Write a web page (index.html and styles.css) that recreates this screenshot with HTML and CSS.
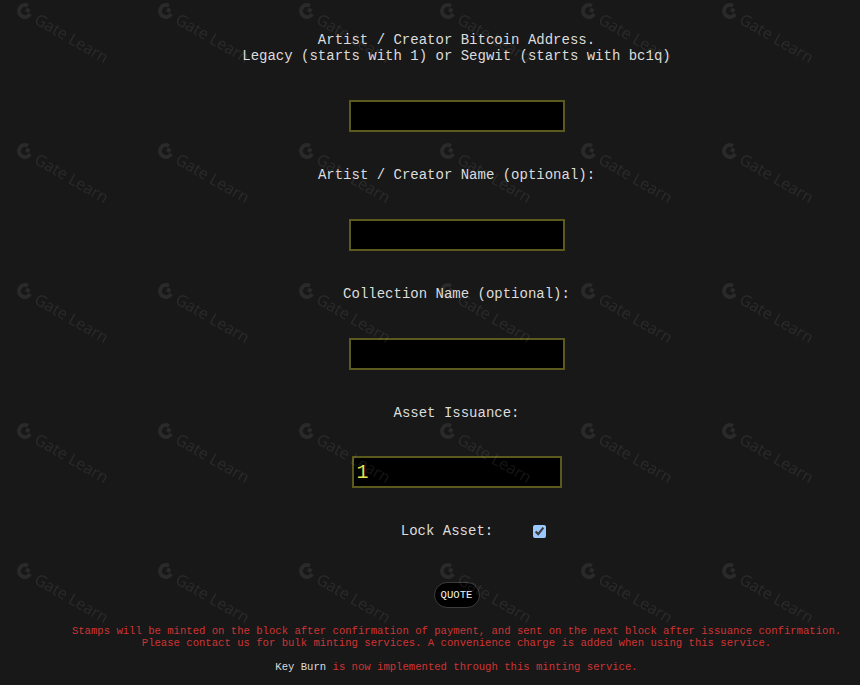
FILE: index.html
```html
<!DOCTYPE html>
<html lang="en">
<head>
<meta charset="utf-8">
<title>Stamp Minting</title>
<link rel="stylesheet" href="styles.css">
</head>
<body>
<main class="mint-form">
  <label class="label" for="addr">Artist / Creator Bitcoin Address.<br>Legacy (starts with 1) or Segwit (starts with bc1q)</label>
  <input class="field" id="addr" type="text">

  <label class="label" for="artist">Artist / Creator Name (optional):</label>
  <input class="field" id="artist" type="text">

  <label class="label" for="collection">Collection Name (optional):</label>
  <input class="field" id="collection" type="text">

  <label class="label" for="qty">Asset Issuance:</label>
  <input class="field field-qty" id="qty" type="text" value="1">

  <div class="lock-row">
    <label class="label" for="lock">Lock Asset:</label>
    <input class="check" id="lock" type="checkbox" checked>
  </div>

  <button class="quote-btn" type="button">QUOTE</button>

  <p class="notes">Stamps will be minted on the block after confirmation of payment, and sent on the next block after issuance confirmation.<br>Please contact us for bulk minting services. A convenience charge is added when using this service.</p>
  <p class="notes notes-key"><span class="hl">Key Burn</span> is now implemented through this minting service.</p>
</main>

<div class="watermarks" aria-hidden="true">
  <div class="mark"><svg viewBox="0 0 16 16"><path d="M8 0A8 8 0 1 0 16 8H12A4 4 0 1 1 8 4Z"/><rect x="8" y="4" width="4" height="4"/></svg><span>Gate Learn</span></div>
  <div class="mark"><svg viewBox="0 0 16 16"><path d="M8 0A8 8 0 1 0 16 8H12A4 4 0 1 1 8 4Z"/><rect x="8" y="4" width="4" height="4"/></svg><span>Gate Learn</span></div>
  <div class="mark"><svg viewBox="0 0 16 16"><path d="M8 0A8 8 0 1 0 16 8H12A4 4 0 1 1 8 4Z"/><rect x="8" y="4" width="4" height="4"/></svg><span>Gate Learn</span></div>
  <div class="mark"><svg viewBox="0 0 16 16"><path d="M8 0A8 8 0 1 0 16 8H12A4 4 0 1 1 8 4Z"/><rect x="8" y="4" width="4" height="4"/></svg><span>Gate Learn</span></div>
  <div class="mark"><svg viewBox="0 0 16 16"><path d="M8 0A8 8 0 1 0 16 8H12A4 4 0 1 1 8 4Z"/><rect x="8" y="4" width="4" height="4"/></svg><span>Gate Learn</span></div>
  <div class="mark"><svg viewBox="0 0 16 16"><path d="M8 0A8 8 0 1 0 16 8H12A4 4 0 1 1 8 4Z"/><rect x="8" y="4" width="4" height="4"/></svg><span>Gate Learn</span></div>

  <div class="mark"><svg viewBox="0 0 16 16"><path d="M8 0A8 8 0 1 0 16 8H12A4 4 0 1 1 8 4Z"/><rect x="8" y="4" width="4" height="4"/></svg><span>Gate Learn</span></div>
  <div class="mark"><svg viewBox="0 0 16 16"><path d="M8 0A8 8 0 1 0 16 8H12A4 4 0 1 1 8 4Z"/><rect x="8" y="4" width="4" height="4"/></svg><span>Gate Learn</span></div>
  <div class="mark"><svg viewBox="0 0 16 16"><path d="M8 0A8 8 0 1 0 16 8H12A4 4 0 1 1 8 4Z"/><rect x="8" y="4" width="4" height="4"/></svg><span>Gate Learn</span></div>
  <div class="mark"><svg viewBox="0 0 16 16"><path d="M8 0A8 8 0 1 0 16 8H12A4 4 0 1 1 8 4Z"/><rect x="8" y="4" width="4" height="4"/></svg><span>Gate Learn</span></div>
  <div class="mark"><svg viewBox="0 0 16 16"><path d="M8 0A8 8 0 1 0 16 8H12A4 4 0 1 1 8 4Z"/><rect x="8" y="4" width="4" height="4"/></svg><span>Gate Learn</span></div>
  <div class="mark"><svg viewBox="0 0 16 16"><path d="M8 0A8 8 0 1 0 16 8H12A4 4 0 1 1 8 4Z"/><rect x="8" y="4" width="4" height="4"/></svg><span>Gate Learn</span></div>

  <div class="mark"><svg viewBox="0 0 16 16"><path d="M8 0A8 8 0 1 0 16 8H12A4 4 0 1 1 8 4Z"/><rect x="8" y="4" width="4" height="4"/></svg><span>Gate Learn</span></div>
  <div class="mark"><svg viewBox="0 0 16 16"><path d="M8 0A8 8 0 1 0 16 8H12A4 4 0 1 1 8 4Z"/><rect x="8" y="4" width="4" height="4"/></svg><span>Gate Learn</span></div>
  <div class="mark"><svg viewBox="0 0 16 16"><path d="M8 0A8 8 0 1 0 16 8H12A4 4 0 1 1 8 4Z"/><rect x="8" y="4" width="4" height="4"/></svg><span>Gate Learn</span></div>
  <div class="mark"><svg viewBox="0 0 16 16"><path d="M8 0A8 8 0 1 0 16 8H12A4 4 0 1 1 8 4Z"/><rect x="8" y="4" width="4" height="4"/></svg><span>Gate Learn</span></div>
  <div class="mark"><svg viewBox="0 0 16 16"><path d="M8 0A8 8 0 1 0 16 8H12A4 4 0 1 1 8 4Z"/><rect x="8" y="4" width="4" height="4"/></svg><span>Gate Learn</span></div>
  <div class="mark"><svg viewBox="0 0 16 16"><path d="M8 0A8 8 0 1 0 16 8H12A4 4 0 1 1 8 4Z"/><rect x="8" y="4" width="4" height="4"/></svg><span>Gate Learn</span></div>

  <div class="mark"><svg viewBox="0 0 16 16"><path d="M8 0A8 8 0 1 0 16 8H12A4 4 0 1 1 8 4Z"/><rect x="8" y="4" width="4" height="4"/></svg><span>Gate Learn</span></div>
  <div class="mark"><svg viewBox="0 0 16 16"><path d="M8 0A8 8 0 1 0 16 8H12A4 4 0 1 1 8 4Z"/><rect x="8" y="4" width="4" height="4"/></svg><span>Gate Learn</span></div>
  <div class="mark"><svg viewBox="0 0 16 16"><path d="M8 0A8 8 0 1 0 16 8H12A4 4 0 1 1 8 4Z"/><rect x="8" y="4" width="4" height="4"/></svg><span>Gate Learn</span></div>
  <div class="mark"><svg viewBox="0 0 16 16"><path d="M8 0A8 8 0 1 0 16 8H12A4 4 0 1 1 8 4Z"/><rect x="8" y="4" width="4" height="4"/></svg><span>Gate Learn</span></div>
  <div class="mark"><svg viewBox="0 0 16 16"><path d="M8 0A8 8 0 1 0 16 8H12A4 4 0 1 1 8 4Z"/><rect x="8" y="4" width="4" height="4"/></svg><span>Gate Learn</span></div>
  <div class="mark"><svg viewBox="0 0 16 16"><path d="M8 0A8 8 0 1 0 16 8H12A4 4 0 1 1 8 4Z"/><rect x="8" y="4" width="4" height="4"/></svg><span>Gate Learn</span></div>

  <div class="mark"><svg viewBox="0 0 16 16"><path d="M8 0A8 8 0 1 0 16 8H12A4 4 0 1 1 8 4Z"/><rect x="8" y="4" width="4" height="4"/></svg><span>Gate Learn</span></div>
  <div class="mark"><svg viewBox="0 0 16 16"><path d="M8 0A8 8 0 1 0 16 8H12A4 4 0 1 1 8 4Z"/><rect x="8" y="4" width="4" height="4"/></svg><span>Gate Learn</span></div>
  <div class="mark"><svg viewBox="0 0 16 16"><path d="M8 0A8 8 0 1 0 16 8H12A4 4 0 1 1 8 4Z"/><rect x="8" y="4" width="4" height="4"/></svg><span>Gate Learn</span></div>
  <div class="mark"><svg viewBox="0 0 16 16"><path d="M8 0A8 8 0 1 0 16 8H12A4 4 0 1 1 8 4Z"/><rect x="8" y="4" width="4" height="4"/></svg><span>Gate Learn</span></div>
  <div class="mark"><svg viewBox="0 0 16 16"><path d="M8 0A8 8 0 1 0 16 8H12A4 4 0 1 1 8 4Z"/><rect x="8" y="4" width="4" height="4"/></svg><span>Gate Learn</span></div>
  <div class="mark"><svg viewBox="0 0 16 16"><path d="M8 0A8 8 0 1 0 16 8H12A4 4 0 1 1 8 4Z"/><rect x="8" y="4" width="4" height="4"/></svg><span>Gate Learn</span></div>
</div>
</body>
</html>
```

FILE: styles.css
```css
html, body {
  margin: 0;
  height: 100%;
  background: #181818;
  overflow: hidden;
}

body {
  font-family: "Liberation Mono", "Courier New", monospace;
  color: #dcdcdc;
}

/* form column, centred slightly right of the window */
.mint-form {
  display: flex;
  flex-direction: column;
  align-items: center;
  padding: 32px 0 0 53px;
}

.label {
  font-size: 14px;
  line-height: 16px;
  text-align: center;
  white-space: nowrap;
}

.field {
  box-sizing: border-box;
  width: 216px;
  height: 32px;
  margin: 36px 0 35px;
  padding: 0 3px;
  background: #000;
  border: 2px solid #5b5a1c;
  outline: none;
  color: #e4e44e;
  font-family: "Liberation Mono", "Courier New", monospace;
  font-size: 20px;
}

.field-qty {
  width: 210px;
  margin-top: 35px;
}

.lock-row {
  display: flex;
  align-items: center;
  gap: 40px;
  height: 16px;
  margin-left: 34px;
}

.check {
  color-scheme: dark;
  width: 13px;
  height: 13px;
  margin: 0;
}

.quote-btn {
  box-sizing: border-box;
  width: 46px;
  height: 26px;
  margin-top: 43px;
  padding: 0;
  border: 1px solid #3c3c3c;
  border-radius: 13px;
  background: #000;
  color: #f2f2f2;
  font-family: "Liberation Mono", "Courier New", monospace;
  font-size: 10.6px;
}

.notes {
  margin: 17px 0 0;
  font-size: 10.6px;
  line-height: 12px;
  color: #cf3434;
  text-align: center;
  white-space: nowrap;
}

.notes-key {
  margin-top: 12px;
}

.hl {
  color: #dcdcdc;
}

/* repeated brand watermark laid over the page */
.watermarks {
  position: fixed;
  inset: 0;
  display: grid;
  grid-template-columns: repeat(6, 141px);
  grid-auto-rows: 140px;
  padding: 3px 0 0 17px;
  pointer-events: none;
  overflow: hidden;
}

.mark {
  display: flex;
  align-items: center;
  gap: 5px;
  height: 16px;
  transform: rotate(30deg);
  transform-origin: 8px 8px;
  color: rgba(255, 255, 255, 0.08);
  font-family: "Open Sans", sans-serif;
  font-size: 16px;
  white-space: nowrap;
}

.mark svg {
  width: 16px;
  height: 16px;
  flex: none;
  fill: currentColor;
}
```
